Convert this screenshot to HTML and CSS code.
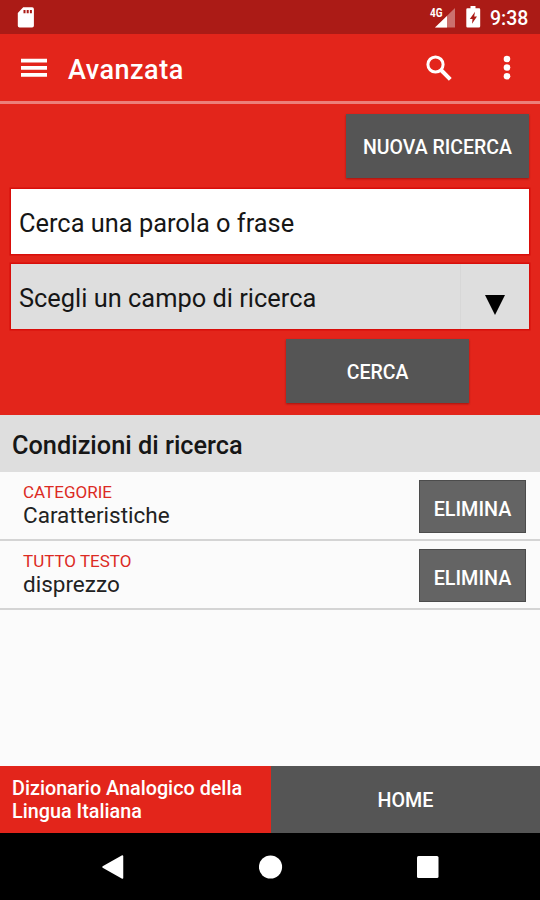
FILE: index.html
```
<!DOCTYPE html>
<html lang="it">
<head>
<meta charset="utf-8">
<title>Avanzata</title>
<link rel="stylesheet" href="styles.css">
</head>
<body>
<div class="status">
  <svg class="sd" width="18" height="22" viewBox="0 0 18 22"><path fill="#fff" d="M6.2.3H15.100a1.800 1.800 0 0 1 1.800 1.800V18.800a1.800 1.800 0 0 1-1.800 1.800H2.600A1.800 1.800 0 0 1 .8 18.800V6Z"/><path fill="#ab1b16" d="M6.500 3h2v3.200h-2zM9.700 3h2v3.200h-2zM12.900 3h2v3.200h-2z"/></svg>
  <svg class="signal" width="28" height="24" viewBox="0 0 28 24"><path fill="#fff" fill-opacity=".38" d="M26 4v19.500H6Z"/><path fill="#fff" d="M18 12v11.500H6Z"/><text class="net" x="1" y="13" textLength="12.500" lengthAdjust="spacingAndGlyphs">4G</text></svg>
  <svg class="battery" width="15" height="22" viewBox="0 0 15 22"><path fill="#fff" d="M4.500 0h5v2.300H13A1.200 1.200 0 0 1 14.200 3.500V20.200a1.200 1.200 0 0 1-1.200 1.200H1.500A1.200 1.200 0 0 1 .3 20.200V3.500a1.200 1.200 0 0 1 1.200-1.200h3Z"/><path fill="#ab1b16" d="M9 5.800 8.200 10.500h2.800L6 17.800l.5-4.800H3.800Z"/></svg>
  <span class="clock">9:38</span>
</div>
<header class="appbar">
  <svg class="burger" width="26" height="20" viewBox="0 0 26 20"><path fill="#fff" d="M0 .7h26v3.800H0zM0 8h26v3.800H0zM0 15h26v3.800H0z"/></svg>
  <h1 class="title">Avanzata</h1>
  <svg class="search" width="27" height="27" viewBox="0 0 27 27" fill="none" stroke="#fff"><circle cx="9.500" cy="9.500" r="7.600" stroke-width="3"/><path d="m15 15 9.300 9.300" stroke-width="4"/></svg>
  <svg class="more" width="8" height="26" viewBox="0 0 8 26" fill="#fff"><circle cx="4" cy="4" r="3.300"/><circle cx="4" cy="12.500" r="3.300"/><circle cx="4" cy="21.200" r="3.300"/></svg>
</header>
<section class="panel">
  <div class="btn new"><span>NUOVA RICERCA</span></div>
  <div class="field"><span class="t-query">Cerca una parola o frase</span></div>
  <div class="field select"><span class="t-select">Scegli un campo di ricerca</span><div class="drop"><svg width="20" height="20" viewBox="0 0 20 20"><path d="M0 0h20L10 20Z"/></svg></div></div>
  <div class="btn go"><span>CERCA</span></div>
</section>
<main class="results">
  <h2 class="heading">Condizioni di ricerca</h2>
  <div class="row">
    <div><div class="label">CATEGORIE</div><div class="value">Caratteristiche</div></div>
    <div class="remove">ELIMINA</div>
  </div>
  <div class="row">
    <div><div class="label">TUTTO TESTO</div><div class="value">disprezzo</div></div>
    <div class="remove">ELIMINA</div>
  </div>
</main>
<footer class="footer">
  <div class="name">Dizionario Analogico della<br>Lingua Italiana</div>
  <div class="home">HOME</div>
</footer>
<nav class="nav">
  <svg width="24" height="24" viewBox="0 0 24 24"><path fill="#fff" stroke="#fff" stroke-width="1.500" stroke-linejoin="round" d="M2 12 21.500 1v22Z"/></svg>
  <svg width="24" height="24" viewBox="0 0 24 24"><circle cx="11.500" cy="12" r="11.600" fill="#fff"/></svg>
  <svg width="24" height="24" viewBox="0 0 24 24"><rect x="1" y="1" width="21.500" height="22" rx="1.500" fill="#fff"/></svg>
</nav>
</body>
</html>
```
FILE: styles.css
```
* { box-sizing: border-box; }
body {
  margin: 0;
  width: 540px;
  height: 900px;
  display: flex;
  flex-direction: column;
  background: #fbfbfb;
  color: #161616;
  font-family: Roboto, sans-serif;
  overflow: hidden;
  white-space: nowrap;
}
svg { display: block; flex: none; }
.status {
  height: 34px;
  flex: none;
  background: #ab1b16;
  color: #fff;
  display: flex;
  align-items: flex-start;
  padding: 0 12px 0 17px;
}
.sd { margin-top: 7px; margin-right: auto; }
.signal { margin-top: 4px; margin-right: 9px; }
.net { font-size: 12px; font-weight: 700; fill: #fff; }
.battery { margin-top: 6px; margin-right: 9px; }
.clock { font-size: 19.500px; line-height: 37px; font-weight: 500; width: 38px; }
.appbar {
  height: 67px;
  flex: none;
  background: #e3251b;
  color: #fff;
  display: flex;
  align-items: center;
  padding: 1px 29px 0 21px;
}
.title { margin: 3px auto 0 21px; font-size: 27px; letter-spacing: .5px; font-weight: 500; line-height: 32px; }
.search { margin-right: 50px; }
.panel {
  height: 314px;
  flex: none;
  background: #e3251b;
  border-top: 3px solid #ec7f7a;
  padding: 10px 11px 0;
  display: flex;
  flex-direction: column;
}
.btn {
  width: 183px;
  height: 64px;
  background: #555;
  color: #fff;
  font-size: 19.500px;
  font-weight: 500;
  display: flex;
  align-items: center;
  justify-content: center;
  padding-top: 3px;
  box-shadow: 0 1px 2px rgba(80, 0, 0, .45);
}
.new { align-self: flex-end; margin-bottom: 11px; }
.go { margin-left: 275px; }
.field {
  height: 65px;
  margin-bottom: 10px;
  background: #fff;
  box-shadow: 0 0 0 1.500px #d80e0a;
  font-size: 25.400px;
  display: flex;
  align-items: center;
  padding: 2px 0 0 8px;
}
.select { background: #dedede; padding-top: 0; }
.t-select { padding-top: 3px; }
.drop {
  margin-left: auto;
  width: 69px;
  height: 100%;
  border-left: 1px solid #d7d7d7;
  padding: 31px 0 0 24px;
}
.results { flex: 1; }
.heading {
  margin: 0;
  height: 57px;
  background: #dedede;
  padding: 3px 12px 0;
  font-size: 25.300px;
  font-weight: 500;
  line-height: 55px;
}
.row {
  height: 69px;
  border-bottom: 2px solid #d4d4d4;
  display: flex;
  justify-content: space-between;
  padding: 8px 14px 0 23px;
}
.label { color: #dc2a24; font-size: 17px; line-height: 24px; }
.value { font-size: 22.500px; line-height: 23px; color: #222; }
.remove {
  width: 107px;
  height: 53px;
  background: #646464;
  border: 1px solid #4c4c4c;
  color: #fff;
  font-size: 19.800px;
  font-weight: 500;
  line-height: 57px;
  text-align: center;
}
.footer { height: 67px; flex: none; display: flex; color: #fff; font-weight: 500; }
.name { width: 271px; background: #e3251b; font-size: 19.800px; line-height: 23px; padding: 11px 12px; }
.home { flex: 1; background: #555; font-size: 19.700px; line-height: 69px; text-align: center; }
.nav {
  height: 67px;
  flex: none;
  background: #000;
  display: flex;
  align-items: center;
  justify-content: space-between;
  padding: 0 100px 0 101px;
}
```
